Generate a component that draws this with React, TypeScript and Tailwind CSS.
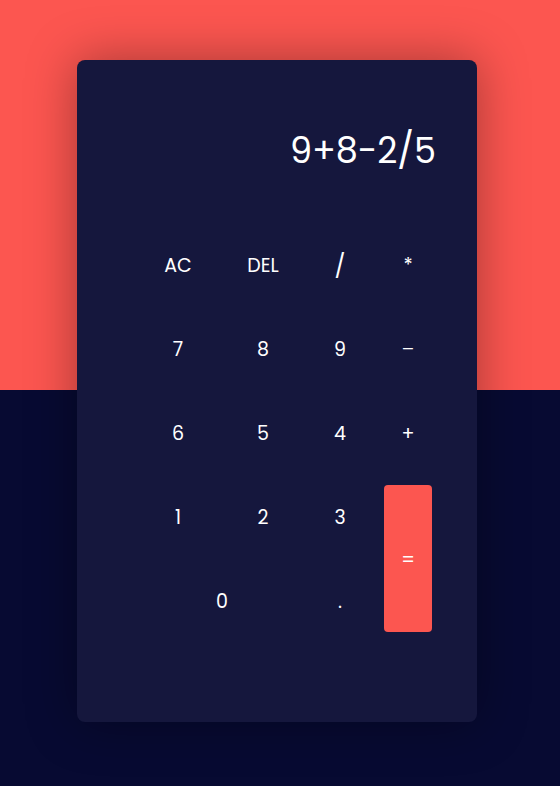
import React from "react";

const font = { fontFamily: '"Poppins", "Inter", "Liberation Sans", sans-serif' };

function Key({ label, className = "" }: { label: string; className?: string }) {
  return (
    <button className={`flex items-center justify-center pt-[3px] text-white text-[19px] ${className}`}>
      {label}
    </button>
  );
}

export default function App() {
  return (
    <div
      className="w-[560px] h-[786px] bg-[linear-gradient(to_bottom,#fc5650_390px,#070a32_390px)] pt-[60px] overflow-hidden"
      style={font}
    >
      <div className="ml-[77px] w-[400px] h-[662px] rounded-[8px] bg-[#15173d] shadow-[0_0_50px_rgba(0,0,0,0.35)]">
        <div className="h-[163px] pt-[66px] pr-[41px] text-right text-white text-[35px] leading-[50px]">
          9+8-2/5
        </div>
        <div className="grid grid-cols-[104px_66px_88px_48px] grid-rows-[repeat(5,84px)] ml-[49px]">
          <Key label="AC" />
          <Key label="DEL" />
          <Key label="/" className="text-[23px]" />
          <Key label="*" />
          <Key label="7" />
          <Key label="8" />
          <Key label="9" />
          <Key label="–" className="font-light" />
          <Key label="6" />
          <Key label="5" />
          <Key label="4" />
          <Key label="+" />
          <Key label="1" />
          <Key label="2" />
          <Key label="3" />
          <div className="row-span-2 py-[10px] pb-[11px]">
            <button className="w-full h-full rounded-[4px] bg-[#fc5650] pt-[4px] text-white text-[19px] flex items-center justify-center">
              =
            </button>
          </div>
          <Key label="0" className="col-span-2 pl-[22px]" />
          <Key label="." />
        </div>
      </div>
    </div>
  );
}
